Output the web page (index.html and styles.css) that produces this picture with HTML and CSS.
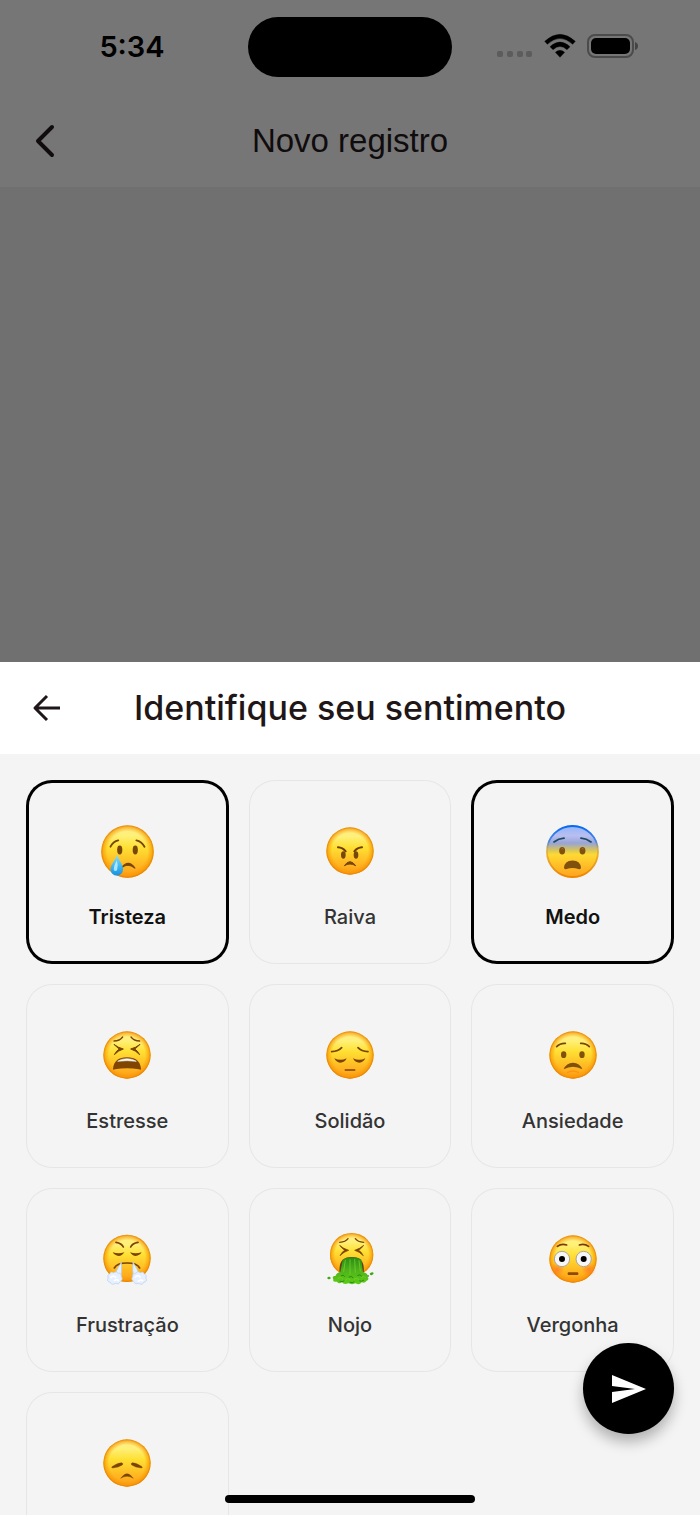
FILE: index.html
```html
<!DOCTYPE html>
<html lang="pt-BR">
<head>
<meta charset="utf-8">
<meta name="viewport" content="width=device-width, initial-scale=1">
<title>Novo registro</title>
<link rel="stylesheet" href="styles.css">
</head>
<body>
<svg class="defs" aria-hidden="true">
  <defs>
    <linearGradient id="skin" x1="0" y1="0" x2="0" y2="1">
      <stop offset="0" stop-color="#fff08c"/><stop offset=".2" stop-color="#fff078"/><stop offset=".42" stop-color="#ffe034"/><stop offset=".75" stop-color="#ffb822"/><stop offset="1" stop-color="#ff9c18"/>
    </linearGradient>
    <linearGradient id="fear" x1="0" y1="0" x2="0" y2="1">
      <stop offset="0" stop-color="#8fb4fb"/><stop offset=".2" stop-color="#b9bff0"/><stop offset=".34" stop-color="#98a4d6"/><stop offset=".48" stop-color="#d9c659"/><stop offset=".56" stop-color="#ffd932"/><stop offset="1" stop-color="#ffa01c"/>
    </linearGradient>
    <radialGradient id="rim">
      <stop offset=".76" stop-color="#f79400" stop-opacity="0"/><stop offset=".92" stop-color="#f79400" stop-opacity=".6"/><stop offset="1" stop-color="#e07a00" stop-opacity=".95"/>
    </radialGradient>
    <linearGradient id="rimFade" x1="0" y1="0" x2="0" y2="1">
      <stop offset="0" stop-color="#0668f0"/><stop offset=".3" stop-color="#2d7fe6" stop-opacity=".8"/><stop offset=".45" stop-color="#d9a030" stop-opacity=".5"/><stop offset="1" stop-color="#ee8600"/>
    </linearGradient>
    <linearGradient id="tear" x1="0" y1="0" x2="0" y2="1">
      <stop offset="0" stop-color="#8fe0f6"/><stop offset=".55" stop-color="#3fb8f2"/><stop offset="1" stop-color="#1690e4"/>
    </linearGradient>
    <linearGradient id="green" x1="0" y1="0" x2="0" y2="1">
      <stop offset="0" stop-color="#2b8a14"/><stop offset=".5" stop-color="#4fb41c"/><stop offset="1" stop-color="#5ecb16"/>
    </linearGradient>
    <radialGradient id="blush">
      <stop offset="0" stop-color="#ff6a2a" stop-opacity=".65"/><stop offset="1" stop-color="#ff6a2a" stop-opacity="0"/>
    </radialGradient>
    <g id="face"><circle cx="96" cy="96" r="71" fill="url(#skin)"/><circle cx="96" cy="96" r="71" fill="url(#rim)"/></g>
  </defs>
</svg>

<div class="screen">
  <header class="top">
    <div class="status">
      <span class="time">5:34</span>
      <span class="island"></span>
      <div class="signals">
        <svg class="dots" viewBox="0 0 36 8" aria-hidden="true"><g fill="#5c5c5c"><rect x="0" y="1" width="6" height="6" rx="2"/><rect x="10" y="1" width="6" height="6" rx="2"/><rect x="20" y="1" width="6" height="6" rx="2"/><rect x="29" y="1" width="6" height="6" rx="2"/></g></svg>
        <svg class="wifi" viewBox="0 0 96 72" aria-hidden="true"><path d="M2 22Q48-20 94 22L86 31Q48-4 10 31ZM18 38Q48 10 78 38L69 47Q48 28 27 47ZM34 55Q48 43 62 55L48 70Z" fill="#000" stroke="#000" stroke-width="1" stroke-linejoin="round"/></svg>
        <svg class="battery" viewBox="0 0 50 24" aria-hidden="true"><rect x="1" y="1" width="45" height="22" rx="7" fill="none" stroke="#4b4b4b" stroke-width="2"/><rect x="4" y="4" width="39" height="16" rx="5"/><path d="M48 8q3 1 3 4t-3 4z" fill="#444"/></svg>
      </div>
    </div>
    <nav class="nav">
      <button class="icon-button" type="button" aria-label="Voltar">
        <svg class="chevron" viewBox="0 0 20 34" aria-hidden="true"><path d="M17 3L3 17L17 31" fill="none" stroke="#100c0d" stroke-width="4" stroke-linecap="round" stroke-linejoin="round"/></svg>
      </button>
      <h1 class="page-title">Novo registro</h1>
    </nav>
  </header>
  <div class="backdrop"></div>

  <section class="sheet" aria-labelledby="sheet-title">
    <div class="sheet-head">
      <button class="icon-button" type="button" aria-label="Voltar">
        <svg class="arrow" viewBox="0 0 28 28" aria-hidden="true"><path d="M14 2L2 14L14 26M2 14H27" fill="none" stroke="#1f1618" stroke-width="3" stroke-linejoin="round"/></svg>
      </button>
      <h2 class="sheet-title" id="sheet-title">Identifique seu sentimento</h2>
    </div>

    <div class="feelings">
      <button class="card" type="button" aria-pressed="true">
        <span class="emoji"><svg viewBox="0 0 192 192" aria-hidden="true"><use href="#face"/>
          <g fill="none" stroke="#7b4300" stroke-width="5" stroke-linecap="round"><path d="M50 83Q57 69 71 66M120 66Q134 69 142 83"/></g>
          <g fill="#784609"><ellipse cx="75" cy="92" rx="7" ry="12"/><ellipse cx="117" cy="92" rx="7" ry="12"/><path d="M80 140Q98 116 116 141Q98 126 80 140Z" stroke="#784609" stroke-width="3" stroke-linejoin="round"/></g>
          <path d="M68 105C73 120 84 133 84 144A17 17 0 0 1 50 144C50 133 63 120 68 105Z" fill="url(#tear)"/><path d="M67 120Q58 136 59 146Q63 152 68 146Q72 134 67 120Z" fill="#c9f3ff" opacity=".8"/></svg></span>
        <span class="label">Tristeza</span>
      </button>
      <button class="card" type="button" aria-pressed="false">
        <span class="emoji"><svg viewBox="0 0 192 192" aria-hidden="true"><use href="#face"/>
          <path d="M60 85Q74 86 83 97M132 85Q118 86 109 97" fill="none" stroke="#6f3c00" stroke-width="6" stroke-linecap="round"/>
          <g fill="#784609"><ellipse cx="76" cy="108" rx="7" ry="11"/><ellipse cx="114" cy="108" rx="7" ry="11"/><path d="M79 140Q96 116 113 140Q96 130 79 140Z" stroke="#784609" stroke-width="3" stroke-linejoin="round"/></g></svg></span>
        <span class="label">Raiva</span>
      </button>
      <button class="card" type="button" aria-pressed="true">
        <span class="emoji"><svg viewBox="0 0 192 192" aria-hidden="true"><circle cx="96" cy="96" r="71" fill="url(#fear)"/><circle cx="96" cy="96" r="69" fill="none" stroke="url(#rimFade)" stroke-width="5"/>
          <path d="M46 70Q58 61 73 60M119 60Q134 61 146 70" fill="none" stroke="#1d4a63" stroke-width="5" stroke-linecap="round"/>
          <g fill="#80500d"><ellipse cx="68" cy="94" rx="8" ry="10"/><ellipse cx="123" cy="94" rx="8" ry="10"/><path d="M73 140Q74 121 96 120Q118 121 119 140Q118 146 112 143Q96 138 80 143Q74 146 73 140Z"/></g><path d="M66 90a3 4 0 0 1 5 0M121 90a3 4 0 0 1 5 0" stroke="#b98134" stroke-width="2" fill="none"/></svg></span>
        <span class="label">Medo</span>
      </button>
      <button class="card" type="button" aria-pressed="false">
        <span class="emoji"><svg viewBox="0 0 192 192" aria-hidden="true"><use href="#face"/>
          <path d="M57 54Q74 54 83 42M108 42Q117 54 134 54" fill="none" stroke="#7b4300" stroke-width="4" stroke-linecap="round"/>
          <path d="M57 64Q68 74 85 78Q68 83 58 95Q65 82 73 78Q64 72 57 64ZM135 64Q124 74 107 78Q124 83 134 95Q127 82 119 78Q128 72 135 64Z" fill="#7b4300" stroke="#7b4300" stroke-width="3" stroke-linejoin="round"/>
          <path d="M54 137Q58 103 96 103Q134 103 138 137Q138 142 132 139Q96 132 60 139Q54 142 54 137Z" fill="#804500"/><path d="M68 115Q78 107 96 107Q114 107 124 115Q96 111 68 115Z" fill="#fff" stroke="#e6e4df" stroke-width="2"/></svg></span>
        <span class="label">Estresse</span>
      </button>
      <button class="card" type="button" aria-pressed="false">
        <span class="emoji"><svg viewBox="0 0 192 192" aria-hidden="true"><use href="#face"/>
          <path d="M41 86Q61 85 71 74M120 74Q130 85 150 86M82 141H110" fill="none" stroke="#7b4300" stroke-width="5" stroke-linecap="round"/>
          <path d="M49 106Q67 115 86 106Q80 119 67 119Q54 118 49 106ZM105 106Q124 115 142 106Q137 118 124 119Q111 119 105 106Z" fill="#7b4300"/></svg></span>
        <span class="label">Solidão</span>
      </button>
      <button class="card" type="button" aria-pressed="false">
        <span class="emoji"><svg viewBox="0 0 192 192" aria-hidden="true"><use href="#face"/>
          <path d="M47 71Q57 60 73 61M119 61Q135 60 145 71" fill="none" stroke="#7b4300" stroke-width="5" stroke-linecap="round"/>
          <g fill="#80500d"><ellipse cx="68" cy="95" rx="8" ry="10"/><ellipse cx="123" cy="95" rx="8" ry="10"/><path d="M68 139Q76 119 96 119Q116 119 124 139Q96 124 68 139Z"/></g><path d="M78 149Q96 139 114 149" fill="none" stroke="#f98a12" stroke-width="4" opacity=".7"/></svg></span>
        <span class="label">Ansiedade</span>
      </button>
      <button class="card" type="button" aria-pressed="false">
        <span class="emoji"><svg viewBox="0 0 192 192" aria-hidden="true"><use href="#face" y="-2"/>
          <path d="M63 46Q80 49 85 60M129 46Q112 49 107 60M58 123Q66 108 96 108Q126 108 134 123" fill="none" stroke="#7b4300" stroke-width="5" stroke-linecap="round"/>
          <path d="M53 76Q71 82 88 76Q81 87 71 87Q59 86 53 76ZM105 76Q122 82 140 76Q134 86 122 87Q112 87 105 76Z" fill="#7b4300"/>
          <g fill="#e6f0ff" stroke="#b4cdec" stroke-width="2"><path d="M79 106Q64 128 61 142L78 146Q81 128 79 106ZM114 106Q129 128 132 142L115 146Q112 128 114 106Z"/><path d="M44 140Q48 132 56 137Q64 130 70 139Q79 137 79 148Q86 157 76 164Q71 175 61 169Q50 176 46 166Q34 164 39 154Q36 144 44 140ZM148 140Q144 132 136 137Q128 130 122 139Q113 137 113 148Q106 157 116 164Q121 175 131 169Q142 176 146 166Q158 164 153 154Q156 144 148 140Z"/></g><path d="M48 151q8-8 14 0M58 161q8-5 12-1M121 150q8-8 14 0M130 162q8-5 13-1" fill="none" stroke="#fff" stroke-width="5" stroke-linecap="round"/></svg></span>
        <span class="label">Frustração</span>
      </button>
      <button class="card" type="button" aria-pressed="false">
        <span class="emoji"><svg viewBox="0 0 192 192" aria-hidden="true"><g transform="translate(13 -5) scale(.916)"><use href="#face"/></g>
          <path d="M65 46Q83 45 90 35M112 35Q119 45 137 46" fill="none" stroke="#7b4300" stroke-width="4" stroke-linecap="round"/>
          <path d="M65 55Q76 65 92 70Q76 75 66 86Q72 74 80 70Q71 64 65 55ZM137 55Q126 65 110 70Q126 75 136 86Q130 74 122 70Q131 64 137 55Z" fill="#7b4300" stroke="#7b4300" stroke-width="2" stroke-linejoin="round"/>
          <path d="M65 136Q60 90 101 90Q142 90 137 136Z" fill="#5a4108"/>
          <path d="M74 98Q84 91 101 91Q120 91 130 98L135 136Q152 140 148 149Q156 157 145 162Q141 170 131 166Q124 176 113 169Q102 174 91 169Q77 174 72 166Q62 173 57 164Q43 166 46 157Q40 147 53 146Q56 137 67 136Z" fill="url(#green)"/>
          <path d="M82 100L77 133M96 98V142M110 97L112 136M123 101L127 132M60 154q8-8 14 0M83 158q8-8 14 0M108 157q8-8 14 0M130 151q7-6 12 0" fill="none" stroke="#7dd62a" stroke-width="2" stroke-linecap="round"/>
          <path d="M70 146q7-5 10 2M93 150q8-5 12 2M119 145q8-5 12 2M66 163q7 3 12-1M96 166q8 3 12-1M125 162q6 3 12-2" fill="none" stroke="#268d10" stroke-width="3" stroke-linecap="round"/>
          <g fill="#42a81b"><ellipse cx="33" cy="153" rx="5" ry="4"/><ellipse cx="161" cy="140" rx="6" ry="4" transform="rotate(-20 161 140)"/><circle cx="150" cy="147" r="3"/></g></svg></span>
        <span class="label">Nojo</span>
      </button>
      <button class="card" type="button" aria-pressed="false">
        <span class="emoji"><svg viewBox="0 0 192 192" aria-hidden="true"><use href="#face"/>
          <circle cx="49" cy="127" r="22" fill="url(#blush)"/><circle cx="143" cy="127" r="22" fill="url(#blush)"/>
          <path d="M49 58Q62 49 77 54M115 54Q130 49 143 58" fill="none" stroke="#7b3b00" stroke-width="5" stroke-linecap="round"/>
          <g fill="#f6f6f6" stroke="#a9a59b" stroke-width="3"><circle cx="63" cy="96" r="23"/><circle cx="128" cy="96" r="23"/></g><circle cx="63" cy="96" r="9"/><circle cx="128" cy="96" r="9"/>
          <rect x="80" y="136" width="32" height="8" rx="3" fill="#8b4a00"/></svg></span>
        <span class="label">Vergonha</span>
      </button>
      <button class="card" type="button" aria-pressed="false" aria-label="Decepção">
        <span class="emoji"><svg viewBox="0 0 192 192" aria-hidden="true"><use href="#face"/>
          <path d="M51 107Q68 95 80 95Q86 97 82 102Q70 110 53 111Q48 110 51 107ZM141 107Q124 95 112 95Q106 97 110 102Q122 110 139 111Q144 110 141 107ZM77 142Q96 114 115 142Q96 130 77 142Z" fill="#784400" stroke="#784400" stroke-width="1" stroke-linejoin="round"/></svg></span>
      </button>
    </div>
  </section>

  <button class="send" type="button" aria-label="Enviar">
    <svg viewBox="0 0 34 30" aria-hidden="true"><path d="M0 1L34 15L0 29V18L23 15L0 12Z" fill="#fff"/></svg>
  </button>
  <span class="home"></span>
</div>
</body>
</html>
```

FILE: styles.css
```css
* { box-sizing: border-box; }

body {
  margin: 0;
  font-family: Inter, "Liberation Sans", sans-serif;
  background: #f4f4f4;
}

button {
  margin: 0;
  padding: 0;
  border: 0;
  background: none;
  font: inherit;
  color: inherit;
}

svg { display: block; overflow: visible; }

.defs { position: absolute; width: 0; height: 0; }

.screen {
  position: relative;
  display: flex;
  flex-direction: column;
  height: 100vh;
  overflow: hidden;
}

.top { background: #767676; }

.status {
  display: grid;
  grid-template-columns: 1fr 204px 1fr;
  align-items: center;
  padding-top: 17px;
}

.time {
  padding-left: 16px;
  text-align: center;
  font-size: 29px;
  line-height: 36px;
  font-weight: 600;
  color: #000;
}

.island {
  height: 60px;
  border-radius: 30px;
  background: #000;
}

.signals {
  display: flex;
  align-items: center;
  gap: 11px;
  padding: 0 0 2px 45px;
}

.dots { width: 36px; height: 8px; margin-top: 16px; }
.wifi { width: 32px; height: 24px; }
.battery { width: 50px; height: 24px; }

.nav, .sheet-head {
  display: grid;
  grid-template-columns: 80px 1fr 80px;
  align-items: center;
}

.nav { height: 110px; padding-top: 18px; }

.icon-button {
  display: flex;
  align-items: center;
  height: 56px;
  padding-left: 33px;
}

.nav .icon-button { padding-left: 35px; }

.chevron { width: 20px; height: 34px; }
.arrow { width: 28px; height: 28px; }

.page-title, .sheet-title {
  margin: 0;
  text-align: center;
  line-height: 40px;
  white-space: nowrap;
}

.page-title {
  font-family: "Liberation Sans", Arial, sans-serif;
  font-size: 33px;
  font-weight: 400;
  color: #100c0d;
}

.backdrop { flex: 0 0 475px; background: #707070; }

.sheet {
  display: flex;
  flex: 1;
  flex-direction: column;
  min-height: 0;
  background: #f4f4f4;
}

.sheet-head {
  flex: none;
  height: 92px;
  background: #fff;
}

.sheet-title {
  font-size: 34px;
  font-weight: 500;
  color: #1f1618;
}

.feelings {
  flex: 1;
  display: grid;
  grid-template-columns: repeat(3, 1fr);
  grid-auto-rows: 184px;
  gap: 20px;
  min-height: 0;
  padding: 26px;
  overflow-y: auto;
  scrollbar-width: none;
}

.card {
  display: flex;
  flex-direction: column;
  align-items: center;
  gap: 22px;
  padding: 39px 0 35px;
  border-radius: 26px;
  box-shadow: inset 0 0 0 1px #e6e6e6;
  color: #333;
}

.card[aria-pressed="true"] {
  box-shadow: inset 0 0 0 3px #000;
  color: #111;
}

.emoji {
  display: flex;
  align-items: center;
  justify-content: center;
  height: 64px;
}

.emoji svg { flex: none; width: 64px; height: 64px; }
.card[aria-pressed="true"] .emoji svg { width: 71px; height: 71px; }

.label {
  font-size: 20px;
  line-height: 24px;
  font-weight: 500;
}

.card[aria-pressed="true"] .label { font-weight: 600; }

.send {
  position: absolute;
  right: 26px;
  bottom: 81px;
  display: flex;
  align-items: center;
  justify-content: center;
  width: 91px;
  height: 91px;
  border-radius: 50%;
  background: #000;
  box-shadow: 0 8px 14px rgba(0, 0, 0, .28);
}

.send svg { width: 34px; height: 30px; }

.home {
  position: absolute;
  bottom: 12px;
  left: 50%;
  width: 250px;
  height: 8px;
  margin-left: -125px;
  border-radius: 4px;
  background: #000;
}
```
